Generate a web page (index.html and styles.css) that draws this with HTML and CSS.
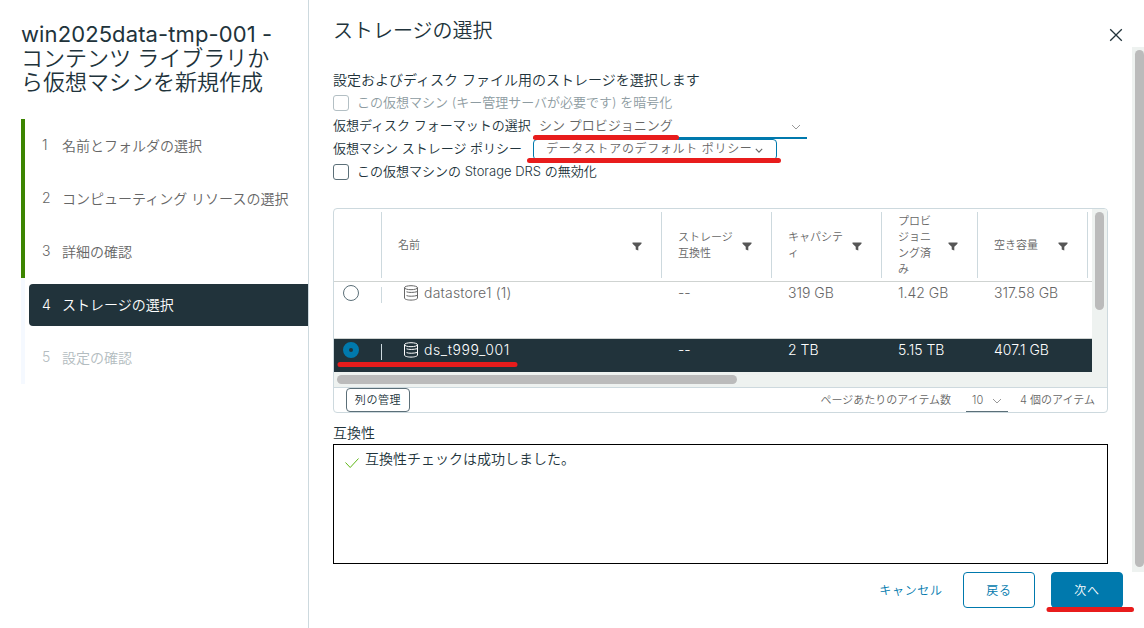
FILE: index.html
```html
<!DOCTYPE html>
<html lang="ja">
<head>
    <meta charset="UTF-8">
    <meta name="viewport" content="width=device-width, initial-scale=1.0">
    <title>ストレージの選択</title>
    <link rel="stylesheet" href="styles.css">
</head>
<body>
    <svg class="defs" width="0" height="0">
        <symbol id="filter" viewBox="0 0 10 9"><path d="M0.5 0.5h9v1.3L6.3 4.8v3.7L3.7 7.6V4.800L0.5 1.8z" fill="#565656"/></symbol>
        <symbol id="chevron" viewBox="0 0 10 6"><path d="M1 1l4 4 4-4" fill="none" stroke="currentColor"/></symbol>
        <symbol id="disk" viewBox="0 0 16 16">
            <g fill="none" stroke="currentColor">
                <ellipse cx="8" cy="2.7" rx="6.5" ry="2"/>
                <path d="M1.5 2.7v10.4c0 1.1 2.9 2 6.5 2s6.5-.9 6.5-2V2.7M3.5 6.8c2.2.9 7 .9 11 -.2M3.5 10.6c2.2.9 7 .9 11 -.2"/>
            </g>
        </symbol>
    </svg>

    <div class="wizard">
        <div class="sidebar">
            <h1><span class="vm-name">win2025data-tmp-001 -</span><br>コンテンツ ライブラリか<br>ら仮想マシンを新規作成</h1>
            <ul class="steps">
                <li class="step done"><div class="step-link"><span class="num">1</span>名前とフォルダの選択</div></li>
                <li class="step done"><div class="step-link"><span class="num">2</span>コンピューティング リソースの選択</div></li>
                <li class="step done"><div class="step-link"><span class="num">3</span>詳細の確認</div></li>
                <li class="step active"><div class="step-link"><span class="num">4</span>ストレージの選択</div></li>
                <li class="step disabled"><div class="step-link"><span class="num">5</span>設定の確認</div></li>
            </ul>
        </div>

        <div class="main">
            <div class="header">
                <h2>ストレージの選択</h2>
                <svg class="close" width="14" height="14" viewBox="0 0 14 14"><path d="M1.2 1.2l11.6 11.6M12.8 1.2L1.2 12.8" stroke="#21333b" stroke-width="1.3"/></svg>
            </div>

            <div class="form">
                <p class="intro">設定およびディスク ファイル用のストレージを選択します</p>
                <label class="check off"><span class="box"></span>この仮想マシン (キー管理サーバが必要です) を暗号化</label>
                <div class="field">
                    <span class="field-label">仮想ディスク フォーマットの選択</span>
                    <div class="select">シン プロビジョニング<svg width="10" height="6"><use href="#chevron"/></svg></div>
                </div>
                <div class="field policy">
                    <span class="field-label">仮想マシン ストレージ ポリシー</span>
                    <div class="dropdown"><span>データストアのデフォルト ポリシー</span><svg width="8" height="5"><use href="#chevron"/></svg></div>
                </div>
                <label class="check drs"><span class="box"></span><span>この仮想マシンの Storage DRS の無効化</span></label>
            </div>

            <div class="datagrid">
                <div class="viewport">
                    <div class="table">
                        <div class="row head">
                            <div class="cell"></div>
                            <div class="cell"><span>名前</span><svg width="10" height="9"><use href="#filter"/></svg></div>
                            <div class="cell"><span>ストレージ<br>互換性</span><svg width="10" height="9"><use href="#filter"/></svg></div>
                            <div class="cell"><span>キャパシテ<br>ィ</span><svg width="10" height="9"><use href="#filter"/></svg></div>
                            <div class="cell"><span>プロビ<br>ジョニ<br>ング済<br>み</span><svg width="10" height="9"><use href="#filter"/></svg></div>
                            <div class="cell"><span>空き容量</span><svg width="10" height="9"><use href="#filter"/></svg></div>
                        </div>
                        <div class="row">
                            <div class="cell pick"><span class="radio"></span></div>
                            <div class="cell name"><svg width="16" height="16"><use href="#disk"/></svg>datastore1 (1)</div>
                            <div class="cell">--</div>
                            <div class="cell">319 GB</div>
                            <div class="cell">1.42 GB</div>
                            <div class="cell">317.58 GB</div>
                        </div>
                        <div class="row selected">
                            <div class="cell pick"><span class="radio"></span></div>
                            <div class="cell name"><svg width="16" height="16"><use href="#disk"/></svg>ds_t999_001</div>
                            <div class="cell">--</div>
                            <div class="cell">2 TB</div>
                            <div class="cell">5.15 TB</div>
                            <div class="cell">407.1 GB</div>
                        </div>
                        <div class="hscroll"><div class="thumb"></div></div>
                    </div>
                    <div class="vscroll"><div class="thumb"></div></div>
                </div>
                <div class="grid-footer">
                    <button class="columns">列の管理</button>
                    <span class="per-page">ページあたりのアイテム数</span>
                    <div class="page-size">10<svg width="10" height="6"><use href="#chevron"/></svg></div>
                    <span class="total">4 個のアイテム</span>
                </div>
            </div>

            <h3>互換性</h3>
            <div class="compat">
                <svg width="16" height="12" viewBox="0 0 16 12"><path d="M1.500 5.5l4.700 5L14.500 1.5" fill="none" stroke="#5eb715"/></svg>
                <span>互換性チェックは成功しました。</span>
            </div>

            <div class="actions">
                <button class="btn link">キャンセル</button>
                <button class="btn outline">戻る</button>
                <button class="btn primary">次へ</button>
            </div>
        </div>

        <div class="page-scroll"><div class="thumb"></div></div>

        <!-- red underlines over the fields to set -->
        <svg class="marks" width="1144" height="628">
            <path d="M535.5 137.5h141M529.5 160.5h249M340 364.5h175M1049 609.5h82.5"/>
        </svg>
    </div>
</body>
</html>
```
FILE: styles.css
```css
* {
    box-sizing: border-box;
}
body {
    margin: 0;
    font-family: Inter, "Noto Sans CJK JP", sans-serif;
    font-weight: 350;
    font-size: 13px;
    color: #21333b;
    background: #fff;
}
h1, h2, h3, p, ul {
    margin: 0;
    padding: 0;
    font-weight: 350;
}
button {
    font-family: inherit;
    font-weight: inherit;
    padding: 0;
    background: #fff;
}
svg {
    flex: none;
}
.defs {
    position: absolute;
}
.wizard {
    position: relative;
    display: flex;
    width: 1144px;
    height: 628px;
    overflow: hidden;
    white-space: nowrap;
}

/* sidebar */
.sidebar {
    width: 309px;
    padding: 22px 0 0 21px;
    border-right: 1px solid #cdd9de;
}
h1 {
    height: 97px;
    font-size: 22px;
    line-height: 24px;
}
.vm-name {
    font-weight: 400;
    letter-spacing: 0.1px;
}
.steps {
    list-style: none;
}
.step {
    height: 53px;
    padding: 6px 0 5px 4px;
    border-left: 4px solid #f5f9ff;
    color: #666;
    font-size: 14px;
}
.step.done {
    border-color: #3c8500;
}
.step-link {
    display: flex;
    align-items: center;
    height: 42px;
    padding: 0 0 3px 13px;
    border-radius: 4px 0 0 4px;
}
.step.active .step-link {
    padding-bottom: 2px;
    background: #21333b;
    color: #fff;
}
.step.disabled {
    color: #b3bcc0;
}
.num {
    width: 20px;
}

/* main */
.main {
    width: 823px;
    padding: 0 24px;
}
.header {
    display: flex;
    justify-content: space-between;
    width: 790px;
    height: 68px;
    padding-top: 16px;
}
h2 {
    font-size: 20px;
    line-height: 31px;
}
.close {
    margin-top: 12px;
}
.form {
    height: 140px;
}
.intro {
    height: 23px;
    font-size: 14px;
    line-height: 24px;
}
.check {
    display: flex;
    align-items: center;
    height: 20px;
    margin-bottom: 2px;
}
.box {
    width: 16px;
    height: 16px;
    margin: 4px 8px 0 0;
    border: 1px solid #5b6f78;
    border-radius: 3px;
}
.off {
    color: #8d9ba1;
}
.off .box {
    border-color: #b3bfc4;
}
.field {
    display: flex;
    height: 26px;
    line-height: 25px;
}
.field-label {
    width: 200px;
}
.select {
    display: flex;
    align-items: center;
    justify-content: space-between;
    width: 274px;
    padding: 0 6px;
    border-bottom: 2px solid #0079ad;
    color: #666;
}
.select svg {
    margin-top: 3px;
    color: #999;
}
.policy {
    height: 21px;
    line-height: 18px;
}
.dropdown {
    display: flex;
    align-items: center;
    width: 244px;
    height: 21px;
    padding: 0 0 1px 12px;
    border: 1px solid #0079ad;
    border-radius: 4px;
    color: #666;
    font-size: 12px;
    letter-spacing: 0.65px;
}
.dropdown svg {
    margin: 2px 0 0 3px;
    stroke-width: 1.4;
}
.drs {
    height: 20px;
}

/* datagrid */
.datagrid {
    height: 205px;
    border: 1px solid #cdd9de;
    border-radius: 4px;
    overflow: hidden;
}
.viewport {
    display: flex;
    height: 179px;
    border-bottom: 1px solid #cdd9de;
}
.table {
    width: 758px;
}
.row {
    display: grid;
    grid-template-columns: 48px 280px 110px 110px 96px 114px;
    height: 57px;
    border-bottom: 1px solid #cfd3d1;
    color: #666;
    font-size: 14px;
    line-height: 22px;
}
.cell {
    padding-left: 16px;
}
.head {
    height: 73px;
    font-size: 11px;
    line-height: 16px;
}
.head .cell {
    display: flex;
    align-items: center;
    justify-content: space-between;
    height: 66px;
    margin-top: 3px;
    padding-right: 19px;
    border-right: 1px solid #cdd9de;
}
.head .cell:last-child {
    width: 110px;
}
.head svg {
    margin-top: 3px;
}
.pick {
    display: flex;
    align-items: center;
    height: 16px;
    margin-top: 5px;
    padding-left: 9px;
    border-right: 1px solid #cdd9de;
}
.radio {
    width: 16px;
    height: 16px;
    margin-top: -4px;
    border: 1px solid #5b6f78;
    border-radius: 50%;
}
.name {
    display: flex;
    padding-left: 21px;
    letter-spacing: 0.2px;
}
.name svg {
    margin: 3px 5px 0 0;
}
.selected {
    height: 33px;
    border: 0;
    background: #21333b;
    color: #fff;
}
.selected .name {
    letter-spacing: 0.6px;
}
.selected .radio {
    border: 6px solid #0079ad;
    background: #21333b;
}
.hscroll {
    height: 15px;
    padding: 3px 4px;
    background: #eef2f0;
}
.thumb {
    background: #bbb;
    border-radius: 5px;
}
.hscroll .thumb {
    width: 400px;
    height: 9px;
    margin-left: -1px;
}
.vscroll {
    width: 15px;
    padding: 3px;
    background: #eef2f0;
}
.vscroll .thumb {
    height: 98px;
}
.grid-footer {
    display: flex;
    align-items: center;
    height: 24px;
    padding: 0 12px;
    color: #666;
    font-size: 11px;
}
.per-page, .total {
    padding-bottom: 2px;
}
.columns {
    width: 64px;
    height: 24px;
    margin-right: auto;
    padding-bottom: 2px;
    border: 1px solid #5b6f78;
    border-radius: 4px;
    color: #21333b;
    font-size: 11px;
    letter-spacing: 0.6px;
}
.page-size {
    display: flex;
    align-items: center;
    justify-content: space-between;
    width: 42px;
    height: 24px;
    margin: 0 12px 0 15px;
    padding: 0 6px;
    border-bottom: 1px solid #5b6f78;
}
.page-size svg {
    margin-top: 3px;
    color: #999;
}

h3 {
    height: 31px;
    padding-top: 8px;
    font-size: 14px;
    line-height: 24px;
}
.compat {
    display: flex;
    align-items: flex-start;
    gap: 5px;
    height: 120px;
    padding: 2px 10px;
    border: 1px solid #000;
    font-size: 14px;
    line-height: 24px;
}
.compat svg {
    margin-top: 10px;
}

.actions {
    display: flex;
    justify-content: flex-end;
    gap: 16px;
    width: 790px;
    padding-top: 8px;
}
.btn {
    width: 72px;
    height: 36px;
    padding-bottom: 1px;
    border: 1px solid #0079ad;
    border-radius: 4px;
    color: #0079ad;
    font-size: 12px;
    letter-spacing: 0.65px;
}
.link {
    border-color: transparent;
}
.primary {
    background: #0079ad;
    color: #fff;
}

.page-scroll {
    width: 12px;
    height: 525px;
    margin-top: 47px;
    padding: 3px 0 5px 3px;
    background: #eef2f0;
}
.page-scroll .thumb {
    height: 517px;
}
.marks {
    position: absolute;
    left: 0;
    top: 0;
    fill: none;
    stroke: #e81c1c;
    stroke-width: 5;
    stroke-linecap: round;
}
```
